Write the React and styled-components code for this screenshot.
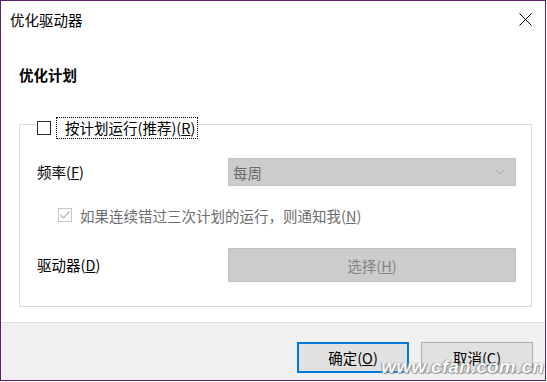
import React from "react";
import styled, { createGlobalStyle } from "styled-components";

const Global = createGlobalStyle`
  html, body { margin: 0; padding: 0; background: #fff; }
  body { font-family: "Noto Sans CJK SC", "Noto Sans", sans-serif; }
  u { text-decoration-thickness: 1px; text-underline-offset: 1px; }
`;

const Window = styled.div`
  position: relative;
  width: 546px;
  height: 381px;
  box-sizing: border-box;
  border: 1px solid #5c2268;
  background: #fff;
  display: flex;
  flex-direction: column;
  overflow: hidden;
  font-size: 14.5px;
  color: #000;
`;

const TitleBar = styled.div`
  height: 37px;
  display: flex;
  align-items: center;
  justify-content: space-between;
  padding: 0 13px 0 9px;
  flex-shrink: 0;
`;

const Title = styled.div`
  font-size: 14.5px;
  line-height: 20px;
`;

const CloseBtn = styled.div`
  width: 14px;
  height: 14px;
  display: flex;
  align-items: center;
  justify-content: center;
`;

const Content = styled.div`
  flex: 1;
  padding: 0 13px 0 18px;
`;

const SectionTitle = styled.div`
  margin-top: 27px;
  line-height: 20px;
  font-weight: bold;
  font-size: 14.5px;
`;

const Group = styled.div`
  margin-top: 39px;
  height: 183px;
  box-sizing: border-box;
  border: 1px solid #dcdcdc;
  padding: 0 14px 0 17px;
`;

const GroupHeader = styled.div`
  margin-top: -8px;
  height: 22px;
  width: max-content;
  display: flex;
  align-items: center;
  gap: 5px;
  background: #fff;
`;

const Box = styled.div`
  width: 14px;
  height: 14px;
  box-sizing: border-box;
  border: 1px solid ${(p) => (p.$disabled ? "#c6c6c6" : "#333")};
  background: #fff;
  display: flex;
  align-items: center;
  justify-content: center;
  flex-shrink: 0;
`;

const Focus = styled.div`
  height: 22px;
  box-sizing: border-box;
  border: 1px dotted #000;
  padding: 0 2px 0 8px;
  display: flex;
  align-items: center;
  line-height: 20px;
`;

const FormRow = styled.div`
  display: grid;
  grid-template-columns: 191px 288px;
  align-items: center;
  margin-top: ${(p) => p.$top}px;
`;

const Label = styled.div`
  line-height: 20px;
`;

const Select = styled.div`
  height: 28px;
  box-sizing: border-box;
  background: #cccccc;
  border: 1px solid #c4c4c4;
  display: flex;
  align-items: center;
  justify-content: space-between;
  padding: 0 10px 0 4px;
  color: #6d6d6d;
`;

const CheckRow = styled.div`
  margin-top: 19px;
  margin-left: 21px;
  height: 20px;
  display: flex;
  align-items: center;
  gap: 8px;
  color: #6d6d6d;
`;

const DisabledButton = styled.div`
  height: 34px;
  box-sizing: border-box;
  background: #cccccc;
  border: 1px solid #bfbfbf;
  display: flex;
  align-items: center;
  justify-content: center;
  color: #838383;
`;

const Footer = styled.div`
  height: 58px;
  flex-shrink: 0;
  box-sizing: border-box;
  border-top: 1px solid #dfdfdf;
  background: #f0f0f0;
  display: flex;
  justify-content: flex-end;
  align-items: flex-start;
  gap: 12px;
  padding: 19px 12px 0 0;
`;

const Button = styled.div`
  width: 112px;
  height: 31px;
  box-sizing: border-box;
  background: #e1e1e1;
  border: ${(p) => (p.$primary ? "2px solid #0078d7" : "1px solid #adadad")};
  display: flex;
  align-items: center;
  justify-content: center;
  line-height: 20px;
`;

const Watermark = styled.div`
  position: absolute;
  right: 1px;
  bottom: 2px;
  font-family: "Liberation Sans", Arial, sans-serif;
  font-style: italic;
  font-weight: bold;
  font-size: 19px;
  letter-spacing: 0.2px;
  color: #fff;
  text-shadow: 0 0 1px #666, 1px 1px 1px #888, -1px 0 1px #999;
  opacity: 0.85;
`;

export default function App() {
  return (
    <>
      <Global />
      <Window>
        <TitleBar>
          <Title>优化驱动器</Title>
          <CloseBtn>
            <svg width="13" height="13" viewBox="0 0 13 13">
              <path d="M0.5 0.5 L12.5 12.5 M12.5 0.5 L0.5 12.5" stroke="#000" strokeWidth="1" fill="none" />
            </svg>
          </CloseBtn>
        </TitleBar>
        <Content>
          <SectionTitle>优化计划</SectionTitle>
          <Group>
            <GroupHeader>
              <Box />
              <Focus>
                按计划运行(推荐)(<u>R</u>)
              </Focus>
            </GroupHeader>
            <FormRow $top={19}>
              <Label>
                频率(<u>F</u>)
              </Label>
              <Select>
                <span>每周</span>
                <svg width="10" height="6" viewBox="0 0 10 6">
                  <path d="M0.5 0.5 L5 5 L9.5 0.5" stroke="#a8a8a8" strokeWidth="1" fill="none" />
                </svg>
              </Select>
            </FormRow>
            <CheckRow>
              <Box $disabled>
                <svg width="12" height="12" viewBox="0 0 12 12">
                  <path d="M1.5 6 L4.5 9 L10.5 2.5" stroke="#b4b4b4" strokeWidth="1.2" fill="none" />
                </svg>
              </Box>
              <span>
                如果连续错过三次计划的运行，则通知我(<u>N</u>)
              </span>
            </CheckRow>
            <FormRow $top={23}>
              <Label>
                驱动器(<u>D</u>)
              </Label>
              <DisabledButton>
                <span>
                  选择(<u>H</u>)
                </span>
              </DisabledButton>
            </FormRow>
          </Group>
        </Content>
        <Footer>
          <Button $primary>
            <span>
              确定(<u>O</u>)
            </span>
          </Button>
          <Button>
            <span>
              取消(<u>C</u>)
            </span>
          </Button>
        </Footer>
        <Watermark>www.cfan.com.cn</Watermark>
      </Window>
    </>
  );
}
